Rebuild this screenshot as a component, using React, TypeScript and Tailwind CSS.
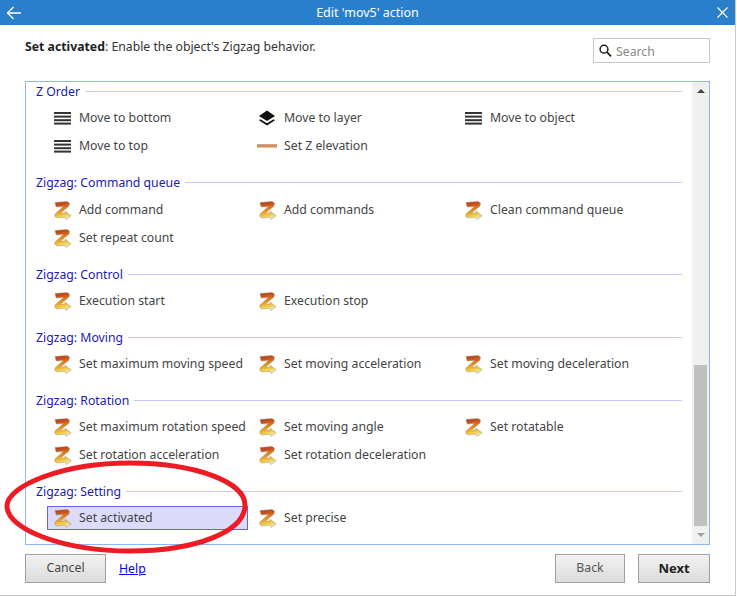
import React from "react";

function Lines() {
  return (
    <svg width="18" height="14" viewBox="0 0 18 14" className="ml-[-1px] shrink-0">
      <g fill="#333">
        <rect x="1" y="1" width="17" height="2" />
        <rect x="1" y="4.6" width="17" height="2" />
        <rect x="1" y="8.2" width="17" height="2" />
        <rect x="1" y="11.6" width="17" height="2" />
      </g>
    </svg>
  );
}

function Layers() {
  return (
    <svg width="18" height="16" viewBox="0 0 18 16" className="ml-[-1px] shrink-0">
      <path d="M9 0.5 L17 6 L9 11 L1 6 Z" fill="#111" />
      <path d="M2.4 9.2 L1 10.2 L9 15.5 L17 10.2 L15.6 9.2 L9 13.2 Z" fill="#111" />
    </svg>
  );
}

function Elevation() {
  return (
    <svg width="20" height="6" viewBox="0 0 20 6" className="ml-[-2px] shrink-0">
      <rect x="0" y="1" width="20" height="1" fill="#c9a68e" />
      <rect x="0" y="2" width="20" height="2" fill="#e08a4c" />
      <rect x="0" y="4" width="20" height="1" fill="#cfc7c0" />
    </svg>
  );
}

function Zig() {
  const id = React.useId();
  return (
    <svg width="18" height="19" viewBox="0 0 18 19" className="shrink-0">
      <defs>
        <linearGradient id={id} x1="0" y1="0" x2="0.2" y2="1">
          <stop offset="0" stopColor="#a5331f" />
          <stop offset="0.3" stopColor="#cf5a1c" />
          <stop offset="0.6" stopColor="#e89a22" />
          <stop offset="0.85" stopColor="#f3cf4a" />
          <stop offset="1" stopColor="#efe6ac" />
        </linearGradient>
      </defs>
      <path
        d="M1 1.5 L13 0.5 L15.5 2 L15 5 L6.5 12.2 L11 12 L11 10.2 L17.2 14.8 L12 18.5 L11 16.2 L3 17 L0.8 15.5 L1 13 L9.5 5.5 L2.2 6 Z"
        fill={`url(#${id})`}
        stroke="#a89274"
        strokeWidth="0.5"
      />
    </svg>
  );
}

type Item = { label: string; icon: React.ReactNode; selected?: boolean };

function Row({ item }: { item: Item }) {
  return (
    <div
      className={`flex h-[24px] items-center border pl-[6px] text-[12.25px] text-[#444] ${
        item.selected ? "border-[#6464e6] bg-[#dcdcfa]" : "border-transparent"
      }`}
    >
      <span className="flex w-[25px] shrink-0 items-center justify-start">{item.icon}</span>
      <span className="whitespace-nowrap">{item.label}</span>
    </div>
  );
}

function Group({
  title,
  items,
  className,
  gridTop = "mt-[4px]",
}: {
  title: string;
  items: Item[];
  className: string;
  gridTop?: string;
}) {
  return (
    <section className={className}>
      <div className="flex h-[20px] items-center gap-[5px]">
        <span className="whitespace-nowrap text-[12.25px] text-[#1a1ab4]">{title}</span>
        <div className="mt-[-2px] h-px flex-1 bg-[#c8c8fa]" />
      </div>
      <div className={`${gridTop} grid grid-cols-[201px_202px_201px] gap-x-[4px] gap-y-[4px] pl-[11px]`}>
        {items.map((it) => (
          <Row key={it.label} item={it} />
        ))}
      </div>
    </section>
  );
}

const L = <Lines />;
const Z = <Zig />;

export default function App() {
  return (
    <div
      className="relative h-[596px] w-[737px] overflow-hidden bg-white text-[#333]"
      style={{ fontFamily: '"Noto Sans", "Open Sans", sans-serif' }}
    >
      <div className="flex h-full w-[736px] flex-col border-r border-b border-[#c8c8c8]">
        <header className="relative flex h-[25px] shrink-0 items-center justify-center bg-[#2a7fcd] text-[12.5px] text-white">
          <svg width="16" height="14" viewBox="0 0 16 14" className="absolute left-[6px] top-[6px]" fill="none" stroke="white" strokeWidth="1.3">
            <path d="M15 7 H1.5 M7.5 1 L1.5 7 L7.5 13" />
          </svg>
          <span className="mt-[2px]">Edit 'mov5' action</span>
          <svg width="11" height="11" viewBox="0 0 11 11" className="absolute right-[7px] top-[7px]" fill="none" stroke="white" strokeWidth="1.2">
            <path d="M0.5 0.5 L10.5 10.5 M10.5 0.5 L0.5 10.5" />
          </svg>
        </header>

        <div className="flex h-[56px] shrink-0 items-start justify-between pl-[25px] pr-[25px]">
          <p className="mt-[13px] text-[12.25px] leading-[18px] text-[#333]">
            <b className="font-bold text-[#222]">Set activated</b>: Enable the object's Zigzag behavior.
          </p>
          <div className="mt-[13px] flex h-[25px] w-[117px] items-center border border-[#c8c8c8] pl-[5px] text-[12.25px] text-[#888]">
            <svg width="13" height="14" viewBox="0 0 13 14" fill="none" stroke="#222" strokeWidth="1.5" className="mr-[4px]">
              <circle cx="5" cy="5.2" r="3.9" />
              <path d="M8 8.2 L12 12.4" strokeWidth="1.8" />
            </svg>
            <span className="mt-[3px]">Search</span>
          </div>
        </div>

        <div className="mx-[25px] flex h-[464px] shrink-0 border border-[#8fb4f8]">
          <div className="min-w-0 flex-1 pl-[10px] pr-[10px] pt-0">
            <Group
              className=""
              title="Z Order"
              items={[
                { label: "Move to bottom", icon: L },
                { label: "Move to layer", icon: <Layers /> },
                { label: "Move to object", icon: L },
                { label: "Move to top", icon: L },
                { label: "Set Z elevation", icon: <Elevation /> },
              ]}
            />
            <Group
              className="mt-[15px]"
              gridTop="mt-[5px]"
              title="Zigzag: Command queue"
              items={[
                { label: "Add command", icon: Z },
                { label: "Add commands", icon: Z },
                { label: "Clean command queue", icon: Z },
                { label: "Set repeat count", icon: Z },
              ]}
            />
            <Group
              className="mt-[15px]"
              title="Zigzag: Control"
              items={[
                { label: "Execution start", icon: Z },
                { label: "Execution stop", icon: Z },
              ]}
            />
            <Group
              className="mt-[15px]"
              title="Zigzag: Moving"
              items={[
                { label: "Set maximum moving speed", icon: Z },
                { label: "Set moving acceleration", icon: Z },
                { label: "Set moving deceleration", icon: Z },
              ]}
            />
            <Group
              className="mt-[15px]"
              title="Zigzag: Rotation"
              items={[
                { label: "Set maximum rotation speed", icon: Z },
                { label: "Set moving angle", icon: Z },
                { label: "Set rotatable", icon: Z },
                { label: "Set rotation acceleration", icon: Z },
                { label: "Set rotation deceleration", icon: Z },
              ]}
            />
            <Group
              className="mt-[15px]"
              title="Zigzag: Setting"
              items={[
                { label: "Set activated", icon: Z, selected: true },
                { label: "Set precise", icon: Z },
              ]}
            />
          </div>
          <div className="flex w-[17px] shrink-0 flex-col bg-[#f0f0f0]">
            <div className="flex h-[18px] items-center justify-center">
              <div className="h-0 w-0 border-x-[4px] border-b-[4px] border-x-transparent border-b-[#444]" />
            </div>
            <div className="mt-[265px] mx-[2px] h-[161px] bg-[#c0c0c0]" />
            <div className="flex h-[18px] items-center justify-center">
              <div className="h-0 w-0 border-x-[4px] border-t-[4px] border-x-transparent border-t-[#a0a0a0]" />
            </div>
          </div>
        </div>

        <footer className="mx-[25px] mt-[9px] flex items-start text-[12.25px]">
          <button className="h-[29px] w-[81px] border border-[#a0a0a0] bg-gradient-to-b from-[#f2f2f2] to-[#dcdcdc] text-[#444]">
            Cancel
          </button>
          <a className="ml-[13px] mt-[6px] text-[#0000e6] underline">Help</a>
          <div className="flex-1" />
          <button className="h-[29px] w-[70px] border border-[#a0a0a0] bg-gradient-to-b from-[#f2f2f2] to-[#dcdcdc] text-[#555]">
            Back
          </button>
          <button className="ml-[13px] h-[29px] w-[72px] border border-[#a0a0a0] bg-gradient-to-b from-[#f2f2f2] to-[#dcdcdc] text-[13px] font-bold text-[#222]">
            Next
          </button>
        </footer>
      </div>

      <svg width="737" height="596" viewBox="0 0 737 596" className="pointer-events-none absolute left-0 top-0" fill="none">
        <path
          d="M7 506 C7 486 62 463 130 463 C195 463 245 482 245 505 C245 532 195 551 130 551 C65 551 7 530 7 506 Z"
          stroke="#ed1c24"
          strokeWidth="5"
        />
      </svg>
    </div>
  );
}
